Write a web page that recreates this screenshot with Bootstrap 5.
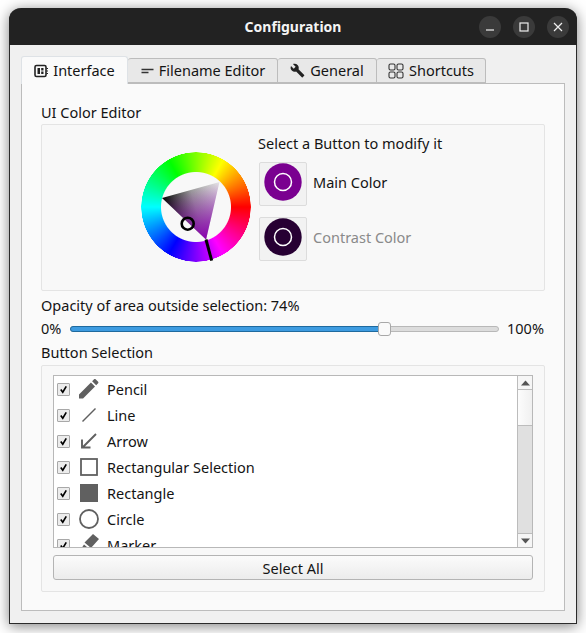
<!DOCTYPE html>
<html lang="en">

<head>
  <meta charset="UTF-8" />
  <meta name="viewport" content="width=device-width, initial-scale=1" />
  <title>Configuration</title>
  <link href="https://cdn.jsdelivr.net/npm/bootstrap@5.3.0/dist/css/bootstrap.min.css" rel="stylesheet" />
  <style>
    body {
      background: #fff;
      padding: 8px 9px 0;
      min-height: 100vh;
      font-family: "Noto Sans", sans-serif;
      font-size: 14.5px;
      line-height: 20px;
      color: #141414;
    }

    .app-window {
      width: 568px;
      height: 616px;
      background: #f0f0f0;
      border: 1px solid #2b2b2b;
      border-top: 0;
      border-radius: 12px 12px 0 0;
      box-shadow: 0 2px 14px rgba(0, 0, 0, 0.5);
    }

    .title-bar {
      height: 37px;
      flex: none;
      background: #222;
      color: #f4f4f4;
      border-radius: 12px 12px 0 0;
      margin: 0 -1px;
      font-weight: 700;
      font-size: 14px;
      padding-right: 8px;
    }

    .title-text {
      left: 0;
      right: 0;
      text-align: center;
    }

    .win-btn {
      width: 22px;
      height: 22px;
      border-radius: 50%;
      background: #3a3a3a;
    }

    .win-body {
      padding: 11px 11px 12px;
    }

    .nav-tabs.tool-tabs {
      border-bottom: 0;
      height: 27px;
      align-items: flex-end;
      flex-wrap: nowrap;
    }

    .tool-tabs .nav-link {
      height: 25px;
      padding: 0;
      margin: 0;
      color: #141414;
      background: #e8e8e8;
      border: 1px solid #bcbcbc;
      border-left-width: 0;
      border-radius: 3px 3px 0 0;
      line-height: 25px;
      gap: 5px;
    }

    .tool-tabs .nav-link.active {
      height: 28px;
      background: #fafafa;
      color: #141414;
      border-left-width: 1px;
      border-bottom: 0;
      position: relative;
      z-index: 1;
      margin-bottom: -1px;
    }

    .tab-a { width: 107px; }
    .tab-b { width: 150px; }
    .tab-c { width: 99px; }
    .tab-d { width: 109px; }

    .tab-pane-box {
      height: 528px;
      background: #fafafa;
      border: 1px solid #bcbcbc;
      padding: 18px 19px 0;
    }

    .sect-box {
      background: #f8f8f8;
      border: 1px solid #e4e4e4;
      border-radius: 2px;
    }

    .color-box {
      height: 167px;
      margin-top: 2px;
      padding: 8px 0 0 99px;
      gap: 7px;
    }

    .wheel-wrap {
      width: 110px;
      height: 110px;
      margin-top: 19px;
    }

    .hue-ring {
      width: 110px;
      height: 110px;
      border-radius: 50%;
      background: conic-gradient(from 90deg, #f00, #f0f, #00f, #0ff, #0f0, #ff0, #f00);
      -webkit-mask: radial-gradient(circle, transparent 34.5px, #000 35.5px, #000 54.5px, transparent 55px);
      mask: radial-gradient(circle, transparent 34.5px, #000 35.5px, #000 54.5px, transparent 55px);
    }

    .wheel-marks {
      left: 0;
      top: 0;
    }

    .swatch-btn {
      width: 48px;
      height: 44px;
      padding: 0 0 4px;
      margin-left: 1px;
      background: #f2f2f2;
      border: 1px solid #dcdcdc;
      border-radius: 2px;
    }

    .swatch-row { gap: 6px; }
    .swatch-row span { margin-bottom: 4px; }
    .main-row { margin-top: 9px; }
    .contrast-row { margin-top: 11px; }
    .muted-label { color: #8a8a8a; }

    .label-gap { margin-top: 4px; }

    .slide-row {
      height: 20px;
      margin-top: 4px;
    }

    .slide-row span { margin-bottom: 2px; }
    .slide-start { width: 29px; }
    .slide-end { margin-left: 8px; }

    .slide-track {
      --bs-progress-height: 6px;
      --bs-progress-bg: #dcdcdc;
      --bs-progress-bar-bg: #3d9be0;
      --bs-progress-border-radius: 3px;
      width: 429px;
      overflow: visible;
      border: 1px solid #b8b8b8;
    }

    .slide-track .progress-bar {
      border-radius: 3px 0 0 3px;
      margin: -1px 0 -1px -1px;
      height: 6px;
      border: 1px solid #1f6a9e;
    }

    .slide-thumb {
      width: 13px;
      height: 14px;
      background: #fafafa;
      border: 1px solid #a8a8a8;
      border-radius: 3px;
      left: 71.8%;
      top: -5px;
    }

    .pick-label { margin-top: 3px; }

    .pick-box {
      height: 227px;
      margin-top: 3px;
      padding: 9px 11px 0;
    }

    .tool-list {
      height: 173px;
      background: #fff;
      border: 1px solid #b8b8b8;
    }

    .tool-rows {
      overflow: hidden;
      --bs-list-group-bg: transparent;
      --bs-list-group-border-width: 0;
      --bs-list-group-color: #141414;
      --bs-list-group-item-padding-x: 3px;
      --bs-list-group-item-padding-y: 0;
    }

    .tool-rows .list-group-item {
      height: 26px;
      flex: 0 0 26px;
      gap: 9px;
    }

    .tool-rows .list-group-item span { margin-left: -1px; }

    .tool-rows .form-check-input {
      width: 13px;
      height: 13px;
      margin: 0;
      flex: none;
      border: 1px solid #a8a8a8;
      border-radius: 1px;
      background-color: #ececec;
    }

    .tool-rows .form-check-input:checked[type=checkbox] {
      background-color: #ececec;
      border-color: #a8a8a8;
      background-size: 11px;
      background-image: url("data:image/svg+xml,%3csvg xmlns='http://www.w3.org/2000/svg' viewBox='0 0 12 12'%3e%3cpath fill='none' stroke='%23000' stroke-width='1.8' d='M3 6l2.2 3L9 2.5'/%3e%3c/svg%3e");
    }

    .tool-icon {
      width: 20px;
      height: 20px;
      flex: none;
      overflow: visible;
    }

    .scroll-col {
      width: 15px;
      flex: none;
      background: #e0e0e0;
      border-left: 1px solid #bcbcbc;
    }

    .scroll-step {
      height: 14px;
      background: #f6f6f6;
      flex: none;
    }

    .scroll-step.up { border-bottom: 1px solid #bcbcbc; }
    .scroll-step.down { border-top: 1px solid #bcbcbc; }

    .scroll-handle {
      height: 36px;
      flex: none;
      background: linear-gradient(90deg, #fcfcfc, #f0f0f0);
      border-bottom: 1px solid #bcbcbc;
    }

    .btn.select-all {
      --bs-btn-color: #141414;
      --bs-btn-hover-color: #141414;
      --bs-btn-border-color: #b4b4b4;
      --bs-btn-hover-border-color: #b4b4b4;
      --bs-btn-border-radius: 3px;
      --bs-btn-font-size: 14.5px;
      --bs-btn-line-height: 20px;
      --bs-btn-padding-y: 0;
      height: 25px;
      margin-top: 7px;
      background: linear-gradient(#fbfbfb, #ececec);
    }
  </style>
</head>

<body>
  <div class="app-window d-flex flex-column">
    <!-- title bar -->
    <div class="title-bar d-flex align-items-center justify-content-end gap-2 position-relative">
      <div class="title-text position-absolute">Configuration</div>
      <div class="win-btn d-flex align-items-center justify-content-center position-relative me-1">
        <svg width="10" height="10" viewBox="0 0 10 10"><path d="M1 8h8" stroke="#eee" stroke-width="1.2" /></svg>
      </div>
      <div class="win-btn d-flex align-items-center justify-content-center position-relative me-1">
        <svg width="10" height="10" viewBox="0 0 10 10"><rect x="1" y="1" width="8" height="8" fill="none" stroke="#eee" stroke-width="1.2" /></svg>
      </div>
      <div class="win-btn d-flex align-items-center justify-content-center position-relative">
        <svg width="10" height="10" viewBox="0 0 10 10"><path d="M1 1l8 8M9 1l-8 8" stroke="#eee" stroke-width="1.2" /></svg>
      </div>
    </div>

    <div class="win-body">
      <ul class="nav nav-tabs tool-tabs">
        <li class="nav-item">
          <a class="nav-link active tab-a d-flex align-items-center justify-content-center" href="#">
            <svg width="14" height="14" viewBox="0 0 14 14"><rect x="1" y="1.5" width="11" height="11" rx="1.5" fill="none" stroke="#222" stroke-width="1.6" /><path d="M3.500 4h2.500v6H3.500zM7.200 4h2.300v2.400H7.200zM7.200 7.500h2.300V10H7.200z" fill="#222" /><path d="M12.500 4.500h1.500M12.500 7h1.500M12.500 9.500h1.500" stroke="#222" /></svg>
            Interface
          </a>
        </li>
        <li class="nav-item">
          <a class="nav-link tab-b d-flex align-items-center justify-content-center" href="#">
            <svg width="14" height="14" viewBox="0 0 14 14"><path d="M1.500 8.500h7M1.500 5.500h12" stroke="#333" stroke-width="1.4" /></svg>
            Filename Editor
          </a>
        </li>
        <li class="nav-item">
          <a class="nav-link tab-c d-flex align-items-center justify-content-center" href="#">
            <svg width="15" height="15" viewBox="0 0 24 24"><path fill="#222" d="M22.7 19l-9.1-9.1c.9-2.3.4-5-1.5-6.9-2-2-5-2.4-7.4-1.3L9 6 6 9 1.6 4.7C.4 7.1.9 10.1 2.9 12.1c1.9 1.9 4.6 2.4 6.9 1.5l9.1 9.1c.4.4 1 .4 1.4 0l2.3-2.3c.5-.4.5-1.1.1-1.4z" /></svg>
            General
          </a>
        </li>
        <li class="nav-item">
          <a class="nav-link tab-d d-flex align-items-center justify-content-center" href="#">
            <svg width="16" height="16" viewBox="0 0 16 16" fill="none" stroke="#333" stroke-width="1.1"><rect x="1" y="1" width="6" height="6" rx="1.5" /><rect x="9" y="1" width="6" height="6" rx="1.5" /><rect x="1" y="9" width="6" height="6" rx="1.5" /><rect x="9" y="9" width="6" height="6" rx="1.5" /></svg>
            Shortcuts
          </a>
        </li>
      </ul>

      <div class="tab-pane-box">
        <div>UI Color Editor</div>
        <div class="sect-box color-box d-flex">
          <div class="wheel-wrap position-relative">
            <div class="hue-ring"></div>
            <svg class="wheel-marks position-absolute" width="110" height="110" viewBox="141 152 110 110">
              <defs>
                <linearGradient id="shadeGrad" gradientUnits="userSpaceOnUse" x1="162" y1="198" x2="219.5" y2="182">
                  <stop offset="0" stop-color="#000" />
                  <stop offset="0.5" stop-color="#999" />
                  <stop offset="1" stop-color="#e8e8e8" />
                </linearGradient>
                <linearGradient id="hueGrad" gradientUnits="userSpaceOnUse" x1="206" y1="239.5" x2="191" y2="190">
                  <stop offset="0" stop-color="#8a00b0" />
                  <stop offset="1" stop-color="#8a00b0" stop-opacity="0" />
                </linearGradient>
              </defs>
              <polygon points="219.5,182 162,198 206,239.5" fill="url(#shadeGrad)" />
              <polygon points="219.5,182 162,198 206,239.5" fill="url(#hueGrad)" />
              <circle cx="187.7" cy="223.7" r="6" fill="none" stroke="#000" stroke-width="2.6" />
              <line x1="206" y1="239.5" x2="211.7" y2="260.7" stroke="#000" stroke-width="3" />
            </svg>
          </div>
          <div class="d-flex flex-column">
            <div>Select a Button to modify it</div>
            <div class="swatch-row main-row d-flex align-items-center">
              <button class="swatch-btn btn d-flex align-items-center justify-content-center" type="button">
                <svg width="38" height="38" viewBox="0 0 38 38"><circle cx="19" cy="19" r="18.7" fill="#7a0090" /><circle cx="19" cy="19" r="8.5" fill="none" stroke="#fff" stroke-width="1.5" /></svg>
              </button>
              <span>Main Color</span>
            </div>
            <div class="swatch-row contrast-row d-flex align-items-center">
              <button class="swatch-btn btn d-flex align-items-center justify-content-center" type="button">
                <svg width="38" height="38" viewBox="0 0 38 38"><circle cx="19" cy="19" r="18.7" fill="#270033" /><circle cx="19" cy="19" r="8.5" fill="none" stroke="#fff" stroke-width="1.5" /></svg>
              </button>
              <span class="muted-label">Contrast Color</span>
            </div>
          </div>
        </div>

        <div class="label-gap">Opacity of area outside selection: 74%</div>
        <div class="slide-row d-flex align-items-center">
          <span class="slide-start">0%</span>
          <div class="progress slide-track position-relative">
            <div class="progress-bar" style="width: 73%"></div>
            <div class="slide-thumb position-absolute"></div>
          </div>
          <span class="slide-end">100%</span>
        </div>

        <div class="pick-label">Button Selection</div>
        <div class="sect-box pick-box">
          <div class="tool-list d-flex">
            <div class="tool-rows list-group list-group-flush flex-grow-1">
              <label class="list-group-item d-flex align-items-center">
                <input class="form-check-input" type="checkbox" checked />
                <svg class="tool-icon" viewBox="3 3 18.500 18.500"><path fill="#606060" d="M3 17.250V21h3.750L17.810 9.940l-3.750-3.750L3 17.250zM20.710 7.040c.39-.39.39-1.020 0-1.410l-2.340-2.340c-.39-.39-1.020-.39-1.410 0l-1.830 1.830 3.750 3.750 1.830-1.830z" /></svg>
                <span>Pencil</span>
              </label>
              <label class="list-group-item d-flex align-items-center">
                <input class="form-check-input" type="checkbox" checked />
                <svg class="tool-icon" viewBox="0 0 20 20"><path d="M3.500 16.500L16.500 3.500" stroke="#606060" stroke-width="1.5" /></svg>
                <span>Line</span>
              </label>
              <label class="list-group-item d-flex align-items-center">
                <input class="form-check-input" type="checkbox" checked />
                <svg class="tool-icon" viewBox="0 0 20 20"><path d="M17 3L4 16M3 8.500V16.500h8.500" fill="none" stroke="#606060" stroke-width="1.9" /></svg>
                <span>Arrow</span>
              </label>
              <label class="list-group-item d-flex align-items-center">
                <input class="form-check-input" type="checkbox" checked />
                <svg class="tool-icon" viewBox="0 0 20 20"><rect x="2" y="2" width="16" height="16" fill="none" stroke="#606060" stroke-width="1.8" /></svg>
                <span>Rectangular Selection</span>
              </label>
              <label class="list-group-item d-flex align-items-center">
                <input class="form-check-input" type="checkbox" checked />
                <svg class="tool-icon" viewBox="0 0 20 20"><rect x="1" y="1" width="18" height="18" fill="#606060" /></svg>
                <span>Rectangle</span>
              </label>
              <label class="list-group-item d-flex align-items-center">
                <input class="form-check-input" type="checkbox" checked />
                <svg class="tool-icon" viewBox="0 0 20 20"><circle cx="10" cy="10" r="9" fill="none" stroke="#606060" stroke-width="1.8" /></svg>
                <span>Circle</span>
              </label>
              <label class="list-group-item d-flex align-items-center">
                <input class="form-check-input" type="checkbox" checked />
                <svg class="tool-icon" viewBox="0 0 20 20"><path fill="#606060" d="M14-1l6 5-8 9-6.500-5.500zM5 9.500l6 5-2.500 2.500H0z" /></svg>
                <span>Marker</span>
              </label>
            </div>
            <div class="scroll-col d-flex flex-column justify-content-between">
              <div class="scroll-step up d-flex align-items-center justify-content-center">
                <svg width="9" height="6" viewBox="0 0 9 6"><path d="M4.500 0.500L9 5.500H0z" fill="#555" /></svg>
              </div>
              <div class="scroll-handle"></div>
              <div class="flex-grow-1"></div>
              <div class="scroll-step down d-flex align-items-center justify-content-center">
                <svg width="9" height="6" viewBox="0 0 9 6"><path d="M4.500 5.500L9 0.500H0z" fill="#555" /></svg>
              </div>
            </div>
          </div>
          <button class="btn select-all w-100" type="button">Select All</button>
        </div>
      </div>
    </div>
  </div>
  <script src="https://cdn.jsdelivr.net/npm/bootstrap@5.3.0/dist/js/bootstrap.bundle.min.js"></script>
</body>

</html>
